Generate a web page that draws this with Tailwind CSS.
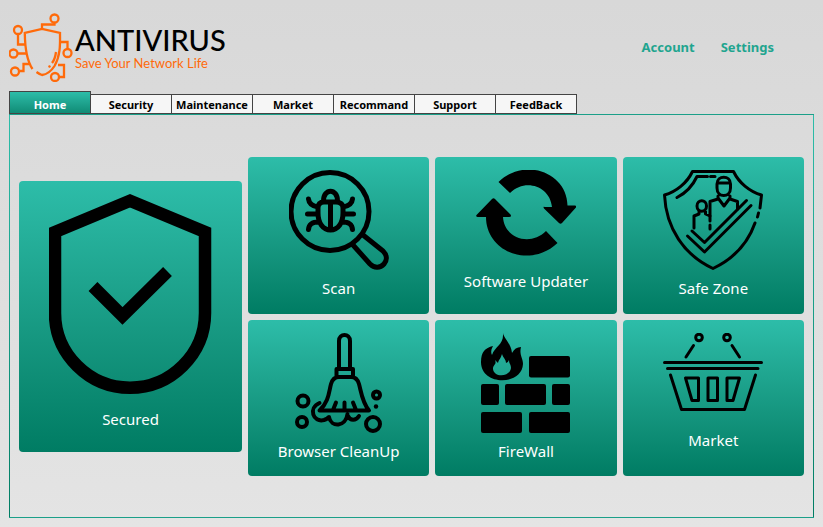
<!DOCTYPE html>
<html lang="en">
<head>
<meta charset="utf-8">
<meta name="viewport" content="width=device-width, initial-scale=1">
<title>Antivirus</title>
<script src="https://cdn.jsdelivr.net/npm/@tailwindcss/browser@4"></script>
</head>
<body class="flex min-h-screen flex-col bg-linear-to-b from-[#d8d8d8] to-[#e4e4e4] px-[9px] pb-[9px] font-['Noto_Sans',sans-serif]">
  <header class="flex items-start justify-between pt-[13px] pr-10">
    <a href="#" class="flex items-start gap-0.5">
      <svg class="h-[69px] w-16" viewBox="9 13 64 69" fill="none" stroke="#ff6a0a" stroke-width="2.300" aria-hidden="true">
        <path d="M32.500 69C27 61 25 50 24.800 33L42 29L60 33C60 42 61 55 54.500 66C51 71.500 46 74.500 42 75C40 74.500 38.500 73.500 36.500 72"/>
        <path d="M42 29V24.500H54.500V22.500M18 34V44.500H25M18 53.500H26M20 71H23.500V64H29M60 42H67.500V49M58 65H64V77H59"/>
        <path d="M56 52C55.500 56 54.500 60 52 63M50 65.500L49 67.500"/>
        <circle cx="54.500" cy="18.500" r="4"/><circle cx="18" cy="30" r="4"/><circle cx="13.500" cy="53.500" r="4"/><circle cx="15" cy="71.500" r="4"/><circle cx="67.500" cy="53" r="4"/><circle cx="55" cy="77" r="4"/>
      </svg>
      <span class="flex flex-col pt-3 font-['Lato',sans-serif]">
        <span class="text-[29px] leading-[30px] font-medium text-black">ANTIVIRUS</span>
        <span class="text-[13px] leading-4 text-[#ff6a0a]">Save Your Network Life</span>
      </span>
    </a>
    <nav class="flex gap-[26px] pt-6 text-[13px] leading-5 font-bold text-[#1fa58f]">
      <a href="#">Account</a>
      <a href="#">Settings</a>
    </nav>
  </header>

  <div role="tablist" class="mt-[9px] flex items-end text-[11px] leading-[18px] font-bold text-black">
    <button role="tab" aria-selected="true" class="h-[23px] w-[82px] border border-[#444] bg-linear-to-b from-[#2dbda9] to-[#108c76] pt-1 text-white">Home</button>
    <button role="tab" class="-ml-px h-5 w-[82px] border border-[#444] bg-[#f6f6f6] pt-px">Security</button>
    <button role="tab" class="-ml-px h-5 w-[82px] border border-[#444] bg-[#f6f6f6] pt-px">Maintenance</button>
    <button role="tab" class="-ml-px h-5 w-[82px] border border-[#444] bg-[#f6f6f6] pt-px">Market</button>
    <button role="tab" class="-ml-px h-5 w-[82px] border border-[#444] bg-[#f6f6f6] pt-px">Recommand</button>
    <button role="tab" class="-ml-px h-5 w-[82px] border border-[#444] bg-[#f6f6f6] pt-px">Support</button>
    <button role="tab" class="-ml-px h-5 w-[82px] border border-[#444] bg-[#f6f6f6] pt-px">FeedBack</button>
  </div>

  <main class="grid flex-1 grid-cols-[223fr_556fr] items-center gap-1.5 border-y border-[#1b9f89] bg-[linear-gradient(#2dbda9,#007c63),linear-gradient(#2dbda9,#007c63)] bg-[length:1px_100%] bg-[position:left,right] bg-no-repeat px-2.5 py-4 text-[15px] leading-6 text-white">
    <button class="flex flex-col items-center rounded bg-linear-to-b from-[#2dbda9] to-[#007c63] pt-[13px] pb-[21px]">
      <svg class="h-[200px] w-[164px]" viewBox="1 0 164 200" fill="none" stroke="#000" aria-hidden="true">
        <path stroke-width="12.500" d="M7 38L82 6.800L157 38V119C157 160 123 193.700 82 193.700C41 193.700 7 160 7 119Z"/>
        <path stroke-width="12.500" d="M45 92.500L74.500 122L119.500 77.500"/>
      </svg>
      <span class="mt-[13px]">Secured</span>
    </button>
    <div class="grid grid-cols-3 gap-1.5">
      <button class="flex flex-col items-center rounded bg-linear-to-b from-[#2dbda9] to-[#007c63] pt-[13px] pb-3.5">
        <svg class="h-[100px] w-[100px]" viewBox="0 0 100 100" fill="none" stroke="#000" stroke-width="5" stroke-linecap="round" stroke-linejoin="round" aria-hidden="true">
          <circle cx="41" cy="41.500" r="39"/>
          <path d="M74 65L94 81C98 85 98.500 90 95 94C91 98.500 85 98 81 94L64 75"/>
          <path d="M35 32H47C51 32 54 34 54 38V43C54 53 49 60 41.500 60C34 60 29 53 29 43V38C29 34 31 32 35 32ZM41.500 32V60M34.500 31C34.500 18 48.500 18 48.500 31M29 37C23 36 20 34 19.500 29M54 37C60 36 63 34 63.500 29M28 44H18.500M55 44H64.500M30 52C23 52 20 54 19.500 59.500M53 52C60 52 63 54 63.500 59.500"/>
        </svg>
        <span class="mt-1.5">Scan</span>
      </button>
      <button class="flex flex-col items-center rounded bg-linear-to-b from-[#2dbda9] to-[#007c63] pt-[13px] pb-3.5">
        <svg class="h-[93px] w-[100px]" viewBox="0 0 100 93" aria-hidden="true">
          <path d="M22.500 12C48-13 91 2 91.500 35.500H99Q101 36 99.500 38L86 53Q84.500 54.500 83 53L68 38.500Q66.500 36 69 37H76C74 16 49 8 34 23Z"/>
          <path d="M81.500 73C54 99 10 82 10 47H1.500Q-1 46.500 1 44.500L16 29Q17.500 27.500 19 29L34.500 44.500Q36 47 33 47H27C28 68 54 77 70 61Z"/>
        </svg>
        <span class="mt-1.5">Software Updater</span>
      </button>
      <button class="flex flex-col items-center rounded bg-linear-to-b from-[#2dbda9] to-[#007c63] pt-[13px] pb-3.5">
        <svg class="h-[100px] w-[100px]" viewBox="0 0 100 100" fill="none" stroke="#000" stroke-width="3" stroke-linecap="round" stroke-linejoin="round" aria-hidden="true">
          <path d="M97 38L98.500 25C87 22 76 13 70.500 1.500H29.500C24 13 13 22 1.500 25C3 58 21 85 50 98.500C70 89 85 73 92 53M95.500 43L94.500 47M14 27.500C23 23 30 15 34 6.500H44.500M47.500 6.500H52"/>
          <path d="M54 18V14C54 5 67.500 5 67.500 14V18C67.500 28 54 28 54 18ZM54.500 13H67M55 26V29L47 31.500V51M47 55V59M67 26V29L74.500 31.500V39M55 28L61 36L67 28"/>
          <path d="M34 36C34 29 43.500 29 43.500 36S34 43 34 36ZM36 41V44L31 46V58M42.500 41V44L47 46"/>
          <path d="M29 61L41.500 72.500L83.500 30.500M24.500 66L41.500 82L88 35.500"/>
        </svg>
        <span class="mt-1.5">Safe Zone</span>
      </button>
      <button class="flex flex-col items-center rounded bg-linear-to-b from-[#2dbda9] to-[#007c63] pt-[13px] pb-[13px]">
        <svg class="h-[100px] w-[88px]" viewBox="0 0 88 100" fill="none" stroke="#000" stroke-width="4" stroke-linecap="round" stroke-linejoin="round" aria-hidden="true">
          <path d="M44 36V8C44 0 55 0 55 8V36M41.500 44V36H58V44M24.500 77.500C34 69 34 58 36 51Q38 44 44 44H56Q62 44 64 51C66 58 67 69 74 77.500ZM38 77L41 69.500M49.500 77V69.500M61 77L58 69.500"/>
          <path d="M24.500 70C13 75 18 90 29 87Q32 86 34 84C36 95 51 94 52.500 81M53 83C55 88 61 88 64 83"/>
          <circle cx="8" cy="68" r="5.500"/><circle cx="7" cy="89" r="5"/><circle cx="81.500" cy="62" r="3.500"/><circle cx="78" cy="91" r="7"/><circle cx="81" cy="73.500" r="2.200" fill="#000" stroke="none"/>
        </svg>
        <span class="mt-1.5">Browser CleanUp</span>
      </button>
      <button class="flex flex-col items-center rounded bg-linear-to-b from-[#2dbda9] to-[#007c63] pt-[13px] pb-[13px]">
        <svg class="h-[100px] w-[89px]" viewBox="0 0 89 100" aria-hidden="true">
          <path fill-rule="evenodd" d="M22 0C23 6 30 10 31 20Q34 14 40 14C38 22 42 25 42 31C41 53 0 53 0 29C0 19 4 15 12 13Q9 18 11 22C14 13 23 12 22 0ZM21 21C19 27 18 26 17 30L14 27C16 32 12 31 12 36C13 45 29 44 30 35C30 31 28 31 28 27Q27 30 25 30C25 26 22 25 21 21Z"/>
          <rect x="48" y="23" width="41" height="21.500" rx="2"/><rect y="51" width="18" height="21" rx="2"/><rect x="24" y="51" width="41" height="21" rx="2"/><rect x="71" y="51" width="18" height="21" rx="2"/><rect y="79" width="41" height="21" rx="2"/><rect x="48" y="79" width="41" height="21" rx="2"/>
        </svg>
        <span class="mt-1.5">FireWall</span>
      </button>
      <button class="flex flex-col items-center rounded bg-linear-to-b from-[#2dbda9] to-[#007c63] pt-[13px] pb-[13px]">
        <svg class="h-[89px] w-[100px]" viewBox="0 0 100 89" fill="none" stroke="#000" stroke-width="3" stroke-linecap="round" stroke-linejoin="round" aria-hidden="true">
          <circle cx="36" cy="4.500" r="3.300"/><circle cx="64" cy="4.500" r="3.300"/>
          <path d="M30.500 12.500L23 24M69 12.500L76.500 24M1.500 29.500H98.500M4.500 35.500H95M7.500 42L18.500 76.500H81.500L92.500 42M22.500 45H35.500V67.500H29ZM45 45H54.500V67.500H45ZM64 45H76.500L70 67.500H64Z"/>
        </svg>
        <span class="mt-1.5">Market</span>
      </button>
    </div>
  </main>
</body>
</html>
